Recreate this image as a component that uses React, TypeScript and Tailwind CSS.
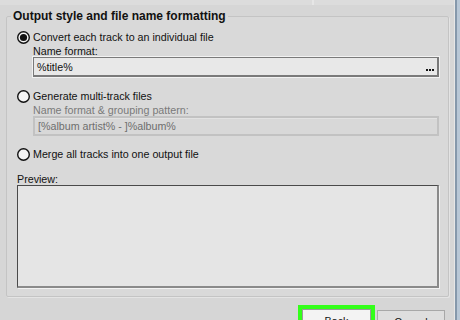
function Radio({ checked }: { checked?: boolean }) {
  return (
    <svg width="13" height="13" viewBox="0 0 13 13" className="shrink-0">
      <circle cx="6.5" cy="6.5" r="5.8" fill="#f4f4f4" stroke="#111" strokeWidth="1.4" />
      {checked && <circle cx="6.5" cy="6.5" r="3.6" fill="#111" />}
    </svg>
  );
}

function RadioRow({ label, checked }: { label: string; checked?: boolean }) {
  return (
    <div className="flex items-center gap-[3px] h-[14px]">
      <Radio checked={checked} />
      <span className="leading-[14px]">{label}</span>
    </div>
  );
}

export default function App() {
  return (
    <div
      className="w-[460px] h-[320px] flex overflow-hidden bg-[#d6d6d6] text-[#111] text-[10.7px]"
      style={{ fontFamily: '"Liberation Sans", Arial, sans-serif' }}
    >
      <div className="w-[454px] flex flex-col">
        {/* top strip */}
        <div className="h-[5px] shrink-0 flex bg-[#dcdcdc]">
          <div className="w-[312px]" />
          <div className="w-[2px] bg-[#e6e6e6]" />
        </div>

        <fieldset className="shrink-0 ml-[6px] mt-[4px] w-[443px] h-[288px] border border-[#c4c4c4] rounded-[2px] bg-[#d9d9d9] pl-[10px] pr-[9px] pt-[7px] shadow-[1px_1px_0_#e4e4e4]">
          <legend className="ml-[-6px] px-[2px] font-bold text-[12px] leading-[14px]">
            Output style and file name formatting
          </legend>

          <RadioRow label="Convert each track to an individual file" checked />
          <div className="ml-[16px] mt-[1px]">
            <div className="leading-[12px]">Name format:</div>
            <div className="h-[20px] flex items-center justify-between bg-[#e8e8e8] border border-[#7a7a7a] border-r-2 border-b-2 shadow-[0_0_0_1px_#f2f2f2] pl-[3px] pr-[3px]">
              <span className="leading-[18px]">%title%</span>
              <span className="flex gap-[1px] mt-[6px]">
                <span className="w-[2px] h-[2px] bg-[#111]" />
                <span className="w-[2px] h-[2px] bg-[#111]" />
                <span className="w-[2px] h-[2px] bg-[#111]" />
              </span>
            </div>
          </div>

          <div className="mt-[12px]">
            <RadioRow label="Generate multi-track files" />
          </div>
          <div className="ml-[16px] mt-[1px]">
            <div className="leading-[12px] text-[#7a7a7a]">Name format &amp; grouping pattern:</div>
            <div className="h-[20px] flex items-center bg-[#d8d8d8] border-2 border-[#c2c2c2] shadow-[inset_0_1px_0_#e2e2e2] pl-[3px] text-[#6e6e6e]">
              [%album artist% - ]%album%
            </div>
          </div>

          <div className="mt-[11px]">
            <RadioRow label="Merge all tracks into one output file" />
          </div>

          <div className="mt-[12px] leading-[12px]">Preview:</div>
          <div className="h-[103px] bg-[#e5e5e5] border border-[#4a4a4a] border-r-2 border-b-2 border-r-[#8a8a8a] border-b-[#8a8a8a] shadow-[1px_1px_0_#f2f2f2]" />
        </fieldset>

        {/* buttons */}
        <div className="shrink-0 mt-[8px] flex justify-end items-start gap-[2px] pr-[9px]">
          <div className="w-[77px] h-[26px] border-4 border-[#33ff1a]">
            <div className="h-full bg-[#f3f3f3] border border-[#9a9a9a] flex justify-center pt-[4px] leading-[14px]">
              Back
            </div>
          </div>
          <div className="mt-[5px] w-[68px] h-[22px] bg-[#dedede] border border-[#a8a8a8] flex justify-center pt-[4px] leading-[14px]">
            Cancel
          </div>
        </div>
      </div>

      {/* window edge */}
      <div className="w-[1px] bg-[#e6e6e6]" />
      <div className="w-[2px] bg-[#8598ab]" />
      <div className="w-[3px] bg-[#b8c7d6]" />
    </div>
  );
}
